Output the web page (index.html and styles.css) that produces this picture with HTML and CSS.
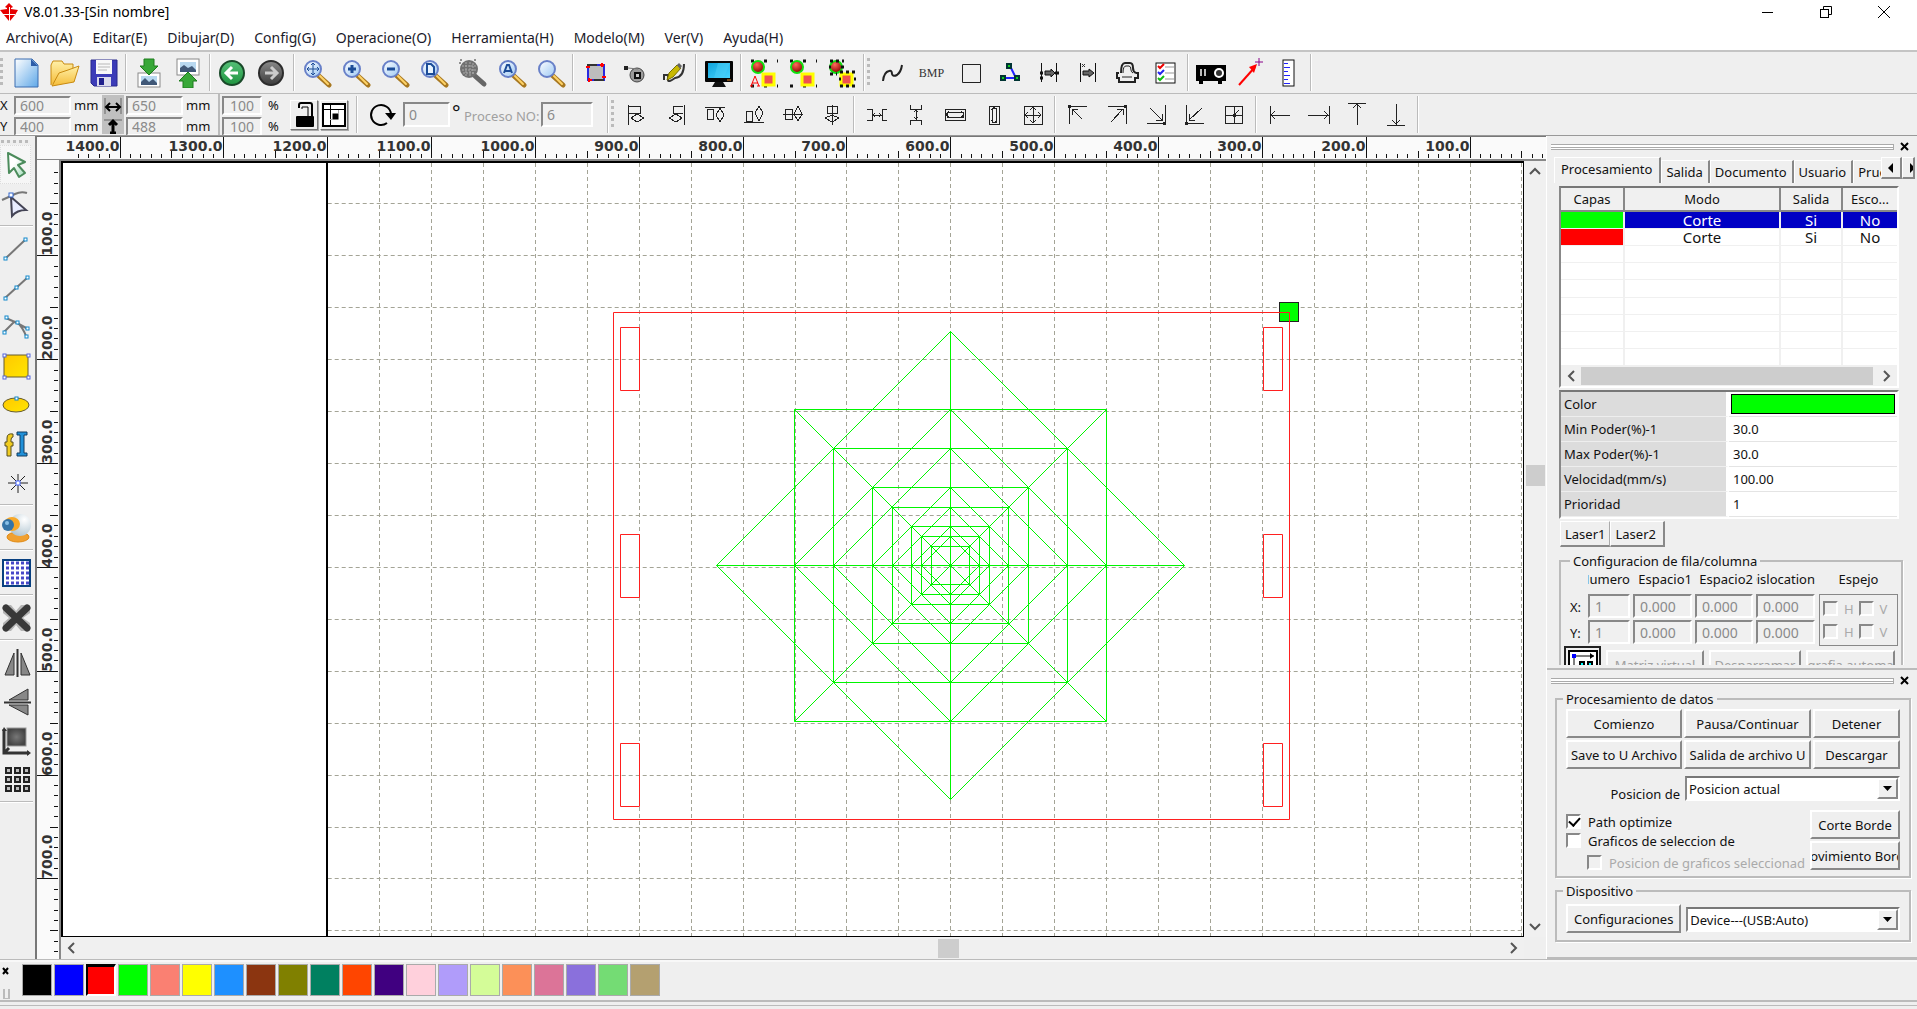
FILE: index.html
```html
<!DOCTYPE html>
<html lang="es">
<head>
    <meta charset="UTF-8">
    <meta name="viewport" content="width=device-width, initial-scale=1.0">
    <title>V8.01.33-[Sin nombre]</title>
    <link rel="stylesheet" href="styles.css">
</head>
<body>
    <!-- Degradados y simbolos compartidos -->
    <svg class="defs" width="0" height="0">
        <defs>
            <linearGradient id="gPage" x1="0" y1="0" x2="1" y2="1"><stop offset="0" stop-color="#fff"/><stop offset="1" stop-color="#5fa8e8"/></linearGradient>
            <linearGradient id="gFolder" x1="0" y1="0" x2="0" y2="1"><stop offset="0" stop-color="#fff0a8"/><stop offset="1" stop-color="#f5bc38"/></linearGradient>
            <linearGradient id="gLens" x1="0" y1="0" x2="1" y2="1"><stop offset="0" stop-color="#fff"/><stop offset="1" stop-color="#9cc8f4"/></linearGradient>
            <linearGradient id="gGreen" x1="0" y1="0" x2="0" y2="1"><stop offset="0" stop-color="#56c078"/><stop offset="1" stop-color="#1f9440"/></linearGradient>
            <linearGradient id="gGray" x1="0" y1="0" x2="0" y2="1"><stop offset="0" stop-color="#8a8a8a"/><stop offset="1" stop-color="#3c3c3c"/></linearGradient>
            <linearGradient id="gScreen" x1="0" y1="0" x2="1" y2="1"><stop offset="0" stop-color="#10a4dc"/><stop offset="1" stop-color="#48d4ff"/></linearGradient>
            <linearGradient id="gYellow" x1="0" y1="0" x2="1" y2="1"><stop offset="0" stop-color="#ffc800"/><stop offset="1" stop-color="#ffe600"/></linearGradient>
            <linearGradient id="gArrow" x1="0" y1="0" x2="1" y2="1"><stop offset="0.4" stop-color="#fff"/><stop offset="1" stop-color="#9fdcb8"/></linearGradient>
            <radialGradient id="gBall" cx="0.4" cy="0.3" r="0.7"><stop offset="0" stop-color="#ff6a5a"/><stop offset="1" stop-color="#8a0000"/></radialGradient>
            <radialGradient id="gCam" cx="0.7" cy="0.25" r="0.9"><stop offset="0" stop-color="#fff"/><stop offset="1" stop-color="#a8bfcc"/></radialGradient>
            <radialGradient id="gBlock"><stop offset="0" stop-color="#777"/><stop offset="1" stop-color="#444"/></radialGradient>
        </defs>
        <symbol id="lens" viewBox="0 0 30 30">
            <path d="M17 18 L27 27" stroke="#a87820" stroke-width="5" stroke-linecap="round"/>
            <path d="M18 18 L26 26" stroke="#ffd468" stroke-width="2" stroke-linecap="round"/>
            <circle cx="11" cy="11" r="8" fill="url(#gLens)" stroke="#6880c8" stroke-width="2"/>
        </symbol>
        <symbol id="shapes" viewBox="0 0 30 30">
            <circle cx="9" cy="9" r="6" fill="url(#gBall)" stroke="#10e010" stroke-width="2"/>
            <rect x="14" y="16" width="11" height="11" fill="#f05050" stroke="#ffff00" stroke-width="3"/>
        </symbol>
    </svg>

    <header class="titlebar">
        <svg class="logo" viewBox="0 0 20 20" width="20" height="20">
            <g fill="#e60000"><path d="M9 1 L13 5 L11 6 V8 H7 V6 L5 5 Z"/><path d="M0 8 L7 7 L8 12 L4 13 Z"/><path d="M18 8 L11 7 L10 12 L15 13 Z"/><rect x="4" y="8" width="10" height="4"/><path d="M9 12 V19 L4 13 Z"/><path d="M10 12 V19 L15 13 Z"/></g>
            <path d="M9.5 5 V18 M3 12.500 H15" stroke="#fff" stroke-width="1"/>
        </svg>
        <h1>V8.01.33-[Sin nombre]</h1>
        <div class="window-buttons">
            <button aria-label="Minimizar"><svg width="12" height="12"><path d="M0 6.500 H11" stroke="#000"/></svg></button>
            <button aria-label="Restaurar"><svg width="12" height="12" fill="none" stroke="#000"><rect x="0.500" y="3.500" width="8" height="8"/><path d="M3.500 3 V0.500 H11.500 V8.500 H9"/></svg></button>
            <button aria-label="Cerrar"><svg width="12" height="12"><path d="M0 0 L12 12 M12 0 L0 12" stroke="#000"/></svg></button>
        </div>
    </header>

    <nav class="menu">
        <a href="#">Archivo(A)</a>
        <a href="#">Editar(E)</a>
        <a href="#">Dibujar(D)</a>
        <a href="#">Config(G)</a>
        <a href="#">Operacione(O)</a>
        <a href="#">Herramienta(H)</a>
        <a href="#">Modelo(M)</a>
        <a href="#">Ver(V)</a>
        <a href="#">Ayuda(H)</a>
    </nav>

    <!-- Barra principal -->
    <div class="toolbar">
        <span class="grip"></span>
        <button class="tool" aria-label="Nuevo"><svg viewBox="0 0 30 30"><path d="M4 1 H21 L27 7 V29 H4 Z" fill="url(#gPage)" stroke="#3a6cb0"/><path d="M20 1 V8 H27 Z" fill="#2c5ca8"/></svg></button>
        <button class="tool" aria-label="Abrir"><svg viewBox="0 0 30 30"><path d="M1 27 V7 L3 3 H12 L14 6 H23 V12" fill="url(#gFolder)" stroke="#c88a10"/><path d="M2 28 L9 15 L18 12 L29 8 L24 24 Z" fill="url(#gFolder)" stroke="#c88a10"/></svg></button>
        <button class="tool" aria-label="Guardar"><svg viewBox="0 0 30 30"><path d="M2 2 H28 V28 H5 L2 25 Z" fill="#3c3cb8" stroke="#28288c"/><rect x="7" y="2" width="16" height="14" fill="#f8f8f8"/><path d="M9 6 H21 M9 9 H21 M9 12 H18" stroke="#b8b8b8"/><rect x="8" y="19" width="14" height="9" fill="#dcdcec"/><rect x="10" y="20" width="5" height="7" fill="#20208c"/></svg></button>
        <span class="sep"></span>
        <button class="tool" aria-label="Importar"><svg viewBox="0 0 30 30"><rect x="4" y="15" width="22" height="14" fill="#fff" stroke="#8a8a8a"/><rect x="7" y="18" width="16" height="9" fill="#b8d8f0"/><path d="M7 27 V24 L11 20 L15 24 L19 21 L23 25 V27 Z" fill="#405878"/><path d="M10 1 H20 V8 H24 L15 17 L6 8 H10 Z" fill="#38a838" stroke="#1c7c1c"/></svg></button>
        <button class="tool" aria-label="Exportar"><svg viewBox="0 0 30 30"><rect x="4" y="1" width="22" height="16" fill="#fff" stroke="#8a8a8a"/><rect x="7" y="4" width="16" height="10" fill="#b8d8f0"/><path d="M7 14 V10 L11 7 L15 10 L19 8 L23 12 V14 Z" fill="#405878"/><path d="M10 30 H20 V23 H24 L15 14 L6 23 H10 Z" fill="#38a838" stroke="#1c7c1c"/></svg></button>
        <span class="sep"></span>
        <button class="tool" aria-label="Deshacer"><svg viewBox="0 0 30 30"><circle cx="14" cy="15" r="12" fill="url(#gGreen)" stroke="#184828" stroke-width="2"/><path d="M20 15 H9 M14 9 L8 15 L14 21" fill="none" stroke="#fff" stroke-width="3"/></svg></button>
        <button class="tool" aria-label="Rehacer"><svg viewBox="0 0 30 30"><circle cx="14" cy="15" r="12" fill="url(#gGray)" stroke="#2c2c2c" stroke-width="2"/><path d="M8 15 H19 M14 9 L20 15 L14 21" fill="none" stroke="#ccc" stroke-width="3"/></svg></button>
        <span class="sep"></span>
        <button class="tool" aria-label="Mover vista"><svg viewBox="0 0 30 30"><use href="#lens"/><path d="M11 5 V17 M5 11 H17 M9 7 L11 5 L13 7 M9 15 L11 17 L13 15 M7 9 L5 11 L7 13 M15 9 L17 11 L15 13" fill="none" stroke="#1c4c98"/></svg></button>
        <button class="tool" aria-label="Acercar"><svg viewBox="0 0 30 30"><use href="#lens"/><path d="M11 7 V15 M7 11 H15" stroke="#1c4c98" stroke-width="3"/></svg></button>
        <button class="tool" aria-label="Alejar"><svg viewBox="0 0 30 30"><use href="#lens"/><path d="M7 11 H15" stroke="#1c4c98" stroke-width="3"/></svg></button>
        <button class="tool" aria-label="Ver pagina"><svg viewBox="0 0 30 30"><use href="#lens"/><path d="M8 6 H12 L15 9 V16 H8 Z" fill="#e8f4ff" stroke="#1c4c98" stroke-width="2"/></svg></button>
        <button class="tool" aria-label="Ver todo"><svg viewBox="0 0 30 30"><path d="M17 18 L26 26" stroke="#666" stroke-width="5" stroke-linecap="round"/><circle cx="11" cy="11" r="9" fill="#707070"/><path d="M8 4 V18 M12 4 V18 M15 5 V16 M4 8 H18 M4 12 H18 M5 15 H17" stroke="#aaa" stroke-dasharray="2 1"/><path d="M2 6 V2 H6 M16 2 H20" fill="none" stroke="#333" stroke-dasharray="2 2"/></svg></button>
        <button class="tool" aria-label="Ver seleccion"><svg viewBox="0 0 30 30"><use href="#lens"/><path d="M7 15 L10 7 H12 L15 15 M8 13 H14" fill="none" stroke="#1c4c98" stroke-width="2"/></svg></button>
        <button class="tool" aria-label="Lupa"><svg viewBox="0 0 30 30"><use href="#lens"/></svg></button>
        <span class="sep"></span>
        <button class="tool" aria-label="Marco"><svg viewBox="0 0 30 30"><rect x="7" y="7" width="16" height="15" fill="#bdbdbd" stroke="#2828e0" stroke-width="2"/><path d="M6 7 H16 M13 22 H23" stroke="#333" stroke-width="2"/><path d="M5 9 H9 M21 5 V9 M19 7 H23 M8 20 V24 M7 22 H11 M21 19 H25" stroke="#f00" stroke-width="2"/></svg></button>
        <button class="tool" aria-label="Origen"><svg viewBox="0 0 30 30"><circle cx="17" cy="17" r="7" fill="#9c9c9c" stroke="#444"/><rect x="15" y="15" width="5" height="5" fill="#ccc" stroke="#111" stroke-width="2"/><rect x="4" y="8" width="4" height="4" fill="#222"/><path d="M8 10 L18 11" stroke="#777"/></svg></button>
        <button class="tool" aria-label="Pluma"><svg viewBox="0 0 30 30"><path d="M5 22 V17 H9 V22 Q9 25 16 20 Q25 19 25 6" fill="none" stroke="#333" stroke-width="2"/><path d="M8 22 L10 15 L18 7 L22 10 L14 19 Z" fill="#c8b800" stroke="#787000"/><path d="M18 7 L20 5 L23 8 L21 11 Z" fill="#666"/></svg></button>
        <span class="sep"></span>
        <button class="tool" aria-label="Vista previa"><svg viewBox="0 0 30 30"><rect x="1" y="3" width="28" height="21" rx="1" fill="#050505"/><rect x="4" y="5" width="22" height="15" fill="url(#gScreen)"/><path d="M14 5 H26 L20 20 H10 Z" fill="#4cd0f8" opacity="0.500"/><path d="M11 24 H19 L22 29 H8 Z" fill="#111"/><path d="M23 22 H27" stroke="#e89030"/></svg></button>
        <span class="sep"></span>
        <button class="tool" aria-label="Agrupar"><svg viewBox="0 0 30 30"><path d="M2 3 H29 M2 28 H29" stroke="#111" stroke-width="3" stroke-dasharray="3 10"/><use href="#shapes"/><path d="M2 28 L6 18 L10 28 M3 25 H9 M1 28 H4 M8 28 H11" fill="none" stroke="#f00" stroke-width="1"/></svg></button>
        <button class="tool" aria-label="Desagrupar"><svg viewBox="0 0 30 30"><path d="M2 3 H29 M2 28 H29" stroke="#111" stroke-width="3" stroke-dasharray="3 10"/><use href="#shapes"/></svg></button>
        <button class="tool" aria-label="Desagrupar todo"><svg viewBox="0 0 30 30"><use href="#shapes"/><path d="M3 3 H17 M3 16 H10 M13 14 H28 M13 28 H28" stroke="#111" stroke-width="3" stroke-dasharray="3 3"/><path d="M2 9 H4 M14 9 H17 M12 21 H14 M27 21 H29" stroke="#111" stroke-width="3"/></svg></button>
        <span class="sep"></span>
        <span class="grip"></span>
        <button class="tool" aria-label="Curva"><svg viewBox="0 0 30 30"><path d="M5 23 Q6 14 11 13 Q14 12 14 16 Q15 19 19 17 Q23 14 24 7" fill="none" stroke="#222" stroke-width="2"/></svg></button>
        <button class="tool bmp">BMP</button>
        <button class="tool" aria-label="Rectangulo"><svg viewBox="0 0 30 30"><path d="M6.500 6.500 H24.500 V24.500 H6.500 Z" fill="none" stroke="#222"/></svg></button>
        <button class="tool" aria-label="Ruta"><svg viewBox="0 0 30 30"><path d="M8 20 H21 L16 10" fill="none" stroke="#2020ff" stroke-width="2"/><g fill="#10d020" stroke="#033" stroke-width="2"><rect x="12" y="6" width="4" height="4"/><rect x="6" y="18" width="4" height="4"/><rect x="20" y="18" width="4" height="4"/></g></svg></button>
        <button class="tool" aria-label="Corte inicial"><svg viewBox="0 0 30 30"><path d="M7.500 5 V24 M22.500 5 V24" stroke="#111"/><path d="M6 15 H9 M6 20 H9 M21 15 H25" stroke="#111" stroke-width="3"/><path d="M11 13 H17 V11 L21 15 L17 19 V17 H11 Z" fill="#666" stroke="#111"/></svg></button>
        <button class="tool" aria-label="Desplazar corte"><svg viewBox="0 0 30 30"><path d="M7.500 5 V24 M22.500 5 V24" stroke="#111"/><path d="M9 6 L12 9 M12 6 L9 9" stroke="#333"/><path d="M10 13 H16 V11 L21 15 L16 19 V17 H10 Z" fill="#666" stroke="#111"/></svg></button>
        <button class="tool" aria-label="Suavizar"><svg viewBox="0 0 30 30" fill="none" stroke="#222"><path d="M9 15 Q9 5 13 5 H18 Q21 5 21 10 Q21 14 24 15" stroke-width="2"/><path d="M11 15 Q11 8 14 8 H17 Q19 8 19 12 Q19 14 21 15 M10 19 H20"/><path d="M7 15 H5 V20 H7 V24 H23 V20 H26 V15 H24" stroke-width="2"/></svg></button>
        <button class="tool" aria-label="Lista de tareas"><svg viewBox="0 0 30 30"><rect x="5" y="5" width="19" height="20" fill="#fff" stroke="#111"/><path d="M14 9 H23 M14 15 H23 M14 21 H23" stroke="#ccc" stroke-width="2"/><path d="M7 8 L9 10 L13 6" fill="none" stroke="#e00" stroke-width="2"/><path d="M7 14 L9 16 L13 12" fill="none" stroke="#22e" stroke-width="2"/><path d="M7 20 L9 22 L13 18" fill="none" stroke="#1b1" stroke-width="2"/></svg></button>
        <span class="sep"></span>
        <button class="tool" aria-label="Simular"><svg viewBox="0 0 30 30"><path d="M0 7 H30 V23 H26 V26 H22 V23 H7 V26 H3 V23 H0 Z" fill="#000"/><circle cx="23" cy="15" r="4" fill="#333" stroke="#fff" stroke-width="2"/><path d="M5 11 V18 M9 11 V18" stroke="#bbb" stroke-width="2"/></svg></button>
        <button class="tool" aria-label="Posicion"><svg viewBox="0 0 30 30"><path d="M4 27 L20 9" stroke="#f00" stroke-width="2"/><path d="M14 9 L22 6 L19 15 Z" fill="#f00"/><path d="M24 0 V8 M20 4 H28" stroke="#808" stroke-width="1"/></svg></button>
        <button class="tool" aria-label="Regla"><svg viewBox="0 0 30 30"><rect x="9" y="2" width="11" height="26" fill="#fff" stroke="#111"/><path d="M10 5.500 H14 M10 9.500 H16 M10 13.500 H14 M10 17.500 H16 M10 21.500 H14 M10 25.500 H16" stroke="#22f"/></svg></button>
        <span class="sep"></span>
    </div>

    <!-- Barra de posicion y alineacion -->
    <div class="toolbar second">
        <div class="coords">
            <label for="px">X</label><input id="px" value="600" disabled><span>mm</span>
            <label for="py">Y</label><input id="py" value="400" disabled><span>mm</span>
        </div>
        <div class="link-icons">
            <svg width="22" height="39" stroke="#000" fill="none"><path d="M3 3 V19 M19 3 V19" stroke="#666"/><path d="M4 12 H18 M8 8 L4 12 L8 16 M14 8 L18 12 L14 16" stroke-width="2"/><path d="M2 25 H20" stroke="#666"/><path d="M11 27 V38 M7 30 L11 26 L15 30 M8 38 H14" stroke-width="3"/></svg>
        </div>
        <div class="coords size">
            <input value="650" aria-label="Ancho" disabled><span>mm</span>
            <input value="488" aria-label="Alto" disabled><span>mm</span>
        </div>
        <div class="coords percent">
            <input value="100" aria-label="Ancho en porcentaje" disabled><span>%</span>
            <input value="100" aria-label="Alto en porcentaje" disabled><span>%</span>
        </div>
        <button class="raised" aria-label="Bloquear proporcion"><svg width="24" height="26"><rect x="4" y="14" width="18" height="11" rx="1" fill="#000"/><path d="M7 6 V3 Q7 1 9 1 H18 Q20 1 20 3 V14" fill="none" stroke="#000" stroke-width="2"/><path d="M10 7 V5 H16 V14" fill="none" stroke="#000"/></svg></button>
        <button class="raised" aria-label="Referencia"><svg width="24" height="26" fill="none" stroke="#000"><rect x="1" y="2" width="22" height="22" stroke-width="2" fill="#fff"/><path d="M8.500 2 V24 M1 7.500 H23"/><rect x="11" y="12" width="5" height="5" fill="#000"/><path d="M16.500 8 V12 M8 17.500 H11" stroke="#aaa"/></svg></button>
        <span class="sep"></span>
        <svg class="rotate" viewBox="0 0 30 30" width="30" height="30"><path d="M20 23 A10 10 0 1 1 24 14" fill="none" stroke="#000" stroke-width="2"/><path d="M18 13 H29 L24 20 Z" fill="#000"/></svg>
        <input class="angle" value="0" aria-label="Angulo" disabled>
        <span class="degree">°</span>
        <label class="process" for="proc">Proceso NO:</label>
        <input class="angle number" id="proc" value="6" disabled>
        <span class="sep"></span>
        <span class="grip"></span>
        <button class="tool line" aria-label="Alinear izquierda"><svg viewBox="0 0 30 30"><path d="M6 5 V25 M7 6 H18 V13 H7 M15 14 L22 18 L15 22 L9 18 Z"/></svg></button>
        <button class="tool line" aria-label="Alinear derecha"><svg viewBox="0 0 30 30"><path d="M23 5 V25 M22 6 H12 V13 H22 M15 14 L8 18 L15 22 L21 18 Z"/></svg></button>
        <button class="tool line" aria-label="Alinear arriba"><svg viewBox="0 0 30 30"><path d="M5 7 H25 M7 9 H13 V19 H7 Z M20 8 L24 15 L20 22 L16 15 Z"/></svg></button>
        <button class="tool line" aria-label="Alinear abajo"><svg viewBox="0 0 30 30"><path d="M5 22 H25 M7 11 H13 V21 H7 Z M20 6 L24 13 L20 21 L16 13 Z"/></svg></button>
        <button class="tool line" aria-label="Centrar horizontal"><svg viewBox="0 0 30 30"><path d="M5 14 H25 M7 9 H14 V19 H7 Z M20 6 L24 14 L20 21 L16 14 Z"/></svg></button>
        <button class="tool line" aria-label="Centrar vertical"><svg viewBox="0 0 30 30"><path d="M15 5 V25 M10 6 H20 V13 H10 Z M15 15 L22 18 L15 22 L8 18 Z"/></svg></button>
        <span class="sep"></span>
        <button class="tool line" aria-label="Espacio horizontal"><svg viewBox="0 0 30 30"><path d="M5 9 H10 V20 H5 M25 9 H20 V20 H25 M10 15 H20 M13 13 L11 15 L13 17 M17 13 L19 15 L17 17"/></svg></button>
        <button class="tool line" aria-label="Espacio vertical"><svg viewBox="0 0 30 30"><path d="M9 5 V9 H20 V5 M9 25 V20 H20 V25 M15 9 V20 M13 12 L15 10 L17 12 M13 17 L15 19 L17 17"/></svg></button>
        <button class="tool line" aria-label="Mismo ancho"><svg viewBox="0 0 30 30"><path d="M5 9 H25 V20 H5 Z M7 12 H23 V17 H7 Z M9 11 L6 14 L9 18 M21 11 L24 14 L21 18"/></svg></button>
        <button class="tool line" aria-label="Mismo alto"><svg viewBox="0 0 30 30"><path d="M10 6 H20 V24 H10 Z M13 8 V22 H17 V8 Z M12 10 L15 7 L18 10 M12 20 L15 23 L18 20"/></svg></button>
        <button class="tool line" aria-label="Mismo tamaño"><svg viewBox="0 0 30 30"><path d="M6 6 H24 V24 H6 Z M15 7 V23 M7 15 H23 M12 10 L15 7 L18 10 M12 20 L15 23 L18 20 M10 12 L7 15 L10 18 M20 12 L23 15 L20 18"/></svg></button>
        <span class="sep"></span>
        <button class="tool line" aria-label="Esquina superior izquierda"><svg viewBox="0 0 30 30"><path d="M6 24 V6 H24 M9 9 L19 19 M9 15 V9 H15"/><path d="M5 6 H8" stroke-width="3"/></svg></button>
        <button class="tool line" aria-label="Esquina superior derecha"><svg viewBox="0 0 30 30"><path d="M24 24 V6 H6 M21 9 L9 22 M15 9 H21 V15"/><path d="M22 6 H25" stroke-width="3"/></svg></button>
        <button class="tool line" aria-label="Esquina inferior derecha"><svg viewBox="0 0 30 30"><path d="M24 5 V23 H6 M9 8 L21 20 M15 20 H21 V14"/><path d="M22 23 H25" stroke-width="3"/></svg></button>
        <button class="tool line" aria-label="Esquina inferior izquierda"><svg viewBox="0 0 30 30"><path d="M6 5 V23 H24 M22 8 L9 20 M9 14 V20 H15"/><path d="M5 23 H8" stroke-width="3"/></svg></button>
        <button class="tool line" aria-label="Centrar en mesa"><svg viewBox="0 0 30 30"><path d="M6 6 H23 V23 H6 Z M15 6 V23 M6 15 H23 M15 15 L20 10"/><path d="M14 15 H17" stroke-width="3"/></svg></button>
        <span class="sep"></span>
        <button class="tool line" aria-label="Borde izquierdo"><svg viewBox="0 0 30 30"><path d="M6 6 V24 M6 15 H26 M11 11 L7 15 L11 19"/></svg></button>
        <button class="tool line" aria-label="Borde derecho"><svg viewBox="0 0 30 30"><path d="M26 6 V24 M5 15 H26 M21 11 L25 15 L21 19"/></svg></button>
        <button class="tool line" aria-label="Borde superior"><svg viewBox="0 0 30 30"><path d="M6 3 H24 M15 3 V25 M11 8 L15 4 L19 8"/></svg></button>
        <button class="tool line" aria-label="Borde inferior"><svg viewBox="0 0 30 30"><path d="M6 25 H24 M15 4 V25 M11 20 L15 24 L19 20"/></svg></button>
        <span class="sep"></span>
    </div>

    <main>
        <!-- Herramientas de dibujo -->
        <aside class="side-tools">
            <span class="grip flat"></span>
            <button class="tool active" aria-label="Seleccionar"><svg viewBox="0 0 30 30"><path d="M7 3 L24 12 L17 15 L24 23 L18 27 L13 18 L8 23 Z" fill="url(#gArrow)" stroke="#4c8c5c" stroke-width="2" stroke-linejoin="round"/></svg></button>
            <button class="tool" aria-label="Editar nodos"><svg viewBox="0 0 30 30"><path d="M1 11 Q8 8 14 5 Q20 2 26 4" fill="none" stroke="#777" stroke-width="2"/><path d="M10 8 L25 21 Q16 21 11 27 Z" fill="#e8ecff" stroke="#445" stroke-width="2"/><rect x="8" y="4" width="4" height="4" fill="#fff" stroke="#36c"/></svg></button>
            <span class="sep"></span>
            <button class="tool" aria-label="Linea"><svg viewBox="0 0 30 30"><path d="M5 24 L24 6" stroke="#777" stroke-width="2"/><g fill="#fff" stroke="#18c"><rect x="3" y="23" width="3" height="3"/><rect x="23" y="4" width="3" height="3"/></g></svg></button>
            <button class="tool" aria-label="Polilinea"><svg viewBox="0 0 30 30"><path d="M4 25 L26 5" stroke="#777" stroke-width="2"/><g fill="#fff" stroke="#18c"><rect x="3" y="24" width="3" height="3"/><rect x="14" y="13" width="3" height="3"/><rect x="25" y="3" width="3" height="3"/></g></svg></button>
            <button class="tool" aria-label="Bezier"><svg viewBox="0 0 30 30"><path d="M3 20 L14 9 M5 6 L16 11 L27 17 M17 11 Q22 16 25 24" fill="none" stroke="#777" stroke-width="2"/><g fill="#fff" stroke="#18c"><rect x="4" y="4" width="3" height="3"/><rect x="2" y="19" width="3" height="3"/><rect x="15" y="9" width="3" height="3"/><rect x="25" y="15" width="3" height="3"/><rect x="24" y="23" width="3" height="3"/></g></svg></button>
            <button class="tool" aria-label="Rectangulo"><svg viewBox="0 0 30 30"><rect x="3" y="4" width="24" height="22" fill="url(#gYellow)" stroke="#665c30"/><g fill="#fff" stroke="#56d"><rect x="2" y="3" width="3" height="3"/><rect x="26" y="3" width="3" height="3"/><rect x="2" y="25" width="3" height="3"/><rect x="26" y="25" width="3" height="3"/></g></svg></button>
            <button class="tool" aria-label="Elipse"><svg viewBox="0 0 30 30"><ellipse cx="15" cy="15" rx="13" ry="7" fill="url(#gYellow)" stroke="#665c30"/><rect x="14" y="7" width="3" height="3" fill="#fff" stroke="#18c"/></svg></button>
            <button class="tool" aria-label="Texto"><svg viewBox="0 0 30 30"><path d="M6 27 V17 H4 V13 H6 V9 Q6 4 12 5 V8 Q10 8 10 11 V13 H12 V17 H10 V27 Z" fill="#f0cc20" stroke="#554c20"/><path d="M16 3 H26 V6 H23 V24 H26 V27 H16 V24 H19 V6 H16 Z" fill="#2090d8" stroke="#123c60"/></svg></button>
            <button class="tool" aria-label="Punto"><svg viewBox="0 0 30 30"><path d="M17 6 V25 M7 15 H27 M10 8 L24 22 M24 8 L10 22" stroke="#222"/><rect x="15" y="13" width="4" height="4" fill="#fff" stroke="#46f"/></svg></button>
            <span class="sep"></span>
            <button class="tool" aria-label="Camara"><svg viewBox="0 0 30 30"><ellipse cx="17" cy="24" rx="11" ry="5" fill="#f0a030" stroke="#e08810"/><circle cx="19" cy="12" r="11" fill="url(#gCam)"/><ellipse cx="11" cy="11" rx="8" ry="7" fill="#f8a828"/><circle cx="7" cy="12" r="6" fill="#3474a8"/><circle cx="6" cy="10" r="2" fill="#88c0e8"/></svg></button>
            <span class="sep"></span>
            <button class="tool" aria-label="Cuadricula"><svg viewBox="0 0 30 30"><rect x="2" y="2" width="27" height="26" fill="#fff" stroke="#084080" stroke-width="2"/><path d="M5 5 H28 M5 10 H28 M5 15 H28 M5 20 H28 M5 25 H28" stroke="#4848c8" stroke-width="3" stroke-dasharray="3 2"/></svg></button>
            <span class="sep"></span>
            <button class="tool" aria-label="Borrar"><svg viewBox="0 0 30 30"><rect x="2" y="2" width="27" height="26" fill="#b4b4b4"/><path d="M10 2 L15 8 L20 2 M10 28 L15 22 L20 28 M2 10 L8 15 L2 20 M29 10 L22 15 L29 20" fill="#efefef"/><path d="M5 5 L26 25 M26 5 L5 25" stroke="#383838" stroke-width="7" stroke-linecap="round"/></svg></button>
            <span class="sep"></span>
            <button class="tool" aria-label="Espejo horizontal"><svg viewBox="0 0 30 30"><path d="M13 5 V27 H4 Z M20 5 V27 H29 Z" fill="#888" stroke="#333"/><path d="M16.500 1 V29" stroke="#333" stroke-width="2"/></svg></button>
            <button class="tool" aria-label="Espejo vertical"><svg viewBox="0 0 30 30"><path d="M27 2 V13 H8 Z M27 28 V18 H8 Z" fill="#888" stroke="#333"/><path d="M3 15.500 H30" stroke="#333" stroke-width="2"/></svg></button>
            <button class="tool" aria-label="Origen"><svg viewBox="0 0 30 30"><rect x="6" y="2" width="19" height="18" fill="url(#gBlock)" stroke="#999"/><path d="M3 3 V27 H28 M3 27 L8 22" fill="none" stroke="#333" stroke-width="3"/><path d="M1 5 L3 1 L6 5 M26 24 L30 27 L26 30" fill="#333"/></svg></button>
            <button class="tool" aria-label="Matriz"><svg viewBox="0 0 30 30" fill="#bbb" stroke="#222" stroke-width="2"><rect x="5" y="3" width="5" height="5"/><rect x="14" y="3" width="5" height="5"/><rect x="23" y="3" width="5" height="5"/><rect x="5" y="12" width="5" height="5"/><rect x="14" y="12" width="5" height="5"/><rect x="23" y="12" width="5" height="5"/><rect x="5" y="21" width="5" height="5"/><rect x="14" y="21" width="5" height="5"/><rect x="23" y="21" width="5" height="5"/></svg></button>
            <span class="sep"></span>
        </aside>

        <section class="workspace">
            <div class="corner"></div>
            <div class="ruler top"><svg id="ruler-x"></svg></div>
            <div class="ruler left"><svg id="ruler-y"></svg></div>
            <div class="view">
                <div class="canvas"><svg id="drawing"></svg></div>
                <div class="scroll vertical">
                    <button aria-label="Subir"><svg width="12" height="12"><path d="M1 9 L6 4 L11 9"/></svg></button>
                    <span class="thumb"></span>
                    <button aria-label="Bajar"><svg width="12" height="12"><path d="M1 3 L6 8 L11 3"/></svg></button>
                </div>
                <div class="scroll horizontal">
                    <button aria-label="Izquierda"><svg width="12" height="12"><path d="M9 1 L4 6 L9 11"/></svg></button>
                    <span class="thumb"></span>
                    <button aria-label="Derecha"><svg width="12" height="12"><path d="M3 1 L8 6 L3 11"/></svg></button>
                </div>
            </div>
        </section>

        <aside class="docks">
            <section class="dock layers">
                <div class="dock-bar"><span></span><button aria-label="Cerrar panel"><svg width="10" height="10"><path d="M1 1 L8 8 M8 1 L1 8"/></svg></button></div>
                <div class="tabs">
                    <button class="current">Procesamiento</button>
                    <button>Salida</button>
                    <button>Documento</button>
                    <button>Usuario</button>
                    <button class="cut">Prueba</button>
                    <button class="arrow" aria-label="Anterior"><svg width="8" height="10"><path d="M6 0 V10 L1 5 Z"/></svg></button>
                    <button class="arrow last" aria-label="Siguiente"><svg width="8" height="10"><path d="M2 0 V10 L7 5 Z"/></svg></button>
                </div>

                <div class="layer-list">
                    <table>
                        <thead>
                            <tr><th class="c1">Capas</th><th>Modo</th><th class="c3">Salida</th><th class="c4">Esco...</th></tr>
                        </thead>
                        <tbody>
                            <tr class="selected"><td class="green"></td><td>Corte</td><td>Si</td><td>No</td></tr>
                            <tr><td class="red"></td><td>Corte</td><td>Si</td><td>No</td></tr>
                            <tr><td></td><td></td><td></td><td></td></tr>
                            <tr><td></td><td></td><td></td><td></td></tr>
                            <tr><td></td><td></td><td></td><td></td></tr>
                            <tr><td></td><td></td><td></td><td></td></tr>
                            <tr><td></td><td></td><td></td><td></td></tr>
                            <tr><td></td><td></td><td></td><td></td></tr>
                            <tr><td></td><td></td><td></td><td></td></tr>
                        </tbody>
                    </table>
                    <div class="scroll horizontal">
                        <button aria-label="Izquierda"><svg width="12" height="12"><path d="M9 1 L4 6 L9 11"/></svg></button>
                        <span class="thumb"></span>
                        <button aria-label="Derecha"><svg width="12" height="12"><path d="M3 1 L8 6 L3 11"/></svg></button>
                    </div>
                </div>

                <table class="props">
                    <tr><th>Color</th><td><span class="color-box"></span></td></tr>
                    <tr><th>Min Poder(%)-1</th><td>30.0</td></tr>
                    <tr><th>Max Poder(%)-1</th><td>30.0</td></tr>
                    <tr><th>Velocidad(mm/s)</th><td>100.00</td></tr>
                    <tr><th>Prioridad</th><td>1</td></tr>
                </table>

                <div class="lasers"><button>Laser1</button><button>Laser2</button></div>

                <fieldset class="array">
                    <legend>Configuracion de fila/columna</legend>
                    <div class="array-body">
                        <div class="array-grid">
                            <i></i><b>Numero</b><b>Espacio1</b><b>Espacio2</b><b>Dislocation</b>
                            <label for="nx">X:</label><input id="nx" value="1" disabled><input value="0.000" aria-label="Espacio1 X" disabled><input value="0.000" aria-label="Espacio2 X" disabled><input value="0.000" aria-label="Dislocation X" disabled>
                            <label for="ny">Y:</label><input id="ny" value="1" disabled><input value="0.000" aria-label="Espacio1 Y" disabled><input value="0.000" aria-label="Espacio2 Y" disabled><input value="0.000" aria-label="Dislocation Y" disabled>
                        </div>
                        <div class="mirror">
                            <b>Espejo</b>
                            <div class="mirror-box">
                                <label><input type="checkbox" disabled>H</label><label><input type="checkbox" disabled>V</label>
                                <label><input type="checkbox" disabled>H</label><label><input type="checkbox" disabled>V</label>
                            </div>
                        </div>
                    </div>
                    <div class="array-actions">
                        <button class="matrix" aria-label="Matriz"><svg width="30" height="30"><rect x="1" y="1" width="28" height="30" fill="#fff" stroke="#000" stroke-width="2"/><path d="M6 6 H26 M6 6 V28" stroke="#000"/><path d="M22 3 L26 6 L22 9" fill="#000"/><rect x="4" y="4" width="4" height="4" fill="#00f"/><g fill="#0ff" stroke="#000" stroke-width="2"><rect x="12" y="12" width="4" height="4"/><rect x="20" y="12" width="4" height="4"/></g></svg></button>
                        <button class="b1" disabled>Matriz virtual</button>
                        <button class="b2" disabled>Desparramar</button>
                        <button class="b3" disabled>grafia automa</button>
                    </div>
                </fieldset>
            </section>

            <section class="dock work">
                <div class="dock-bar"><span></span><button aria-label="Cerrar panel"><svg width="10" height="10"><path d="M1 1 L8 8 M8 1 L1 8"/></svg></button></div>
                <fieldset>
                    <legend>Procesamiento de datos</legend>
                    <div class="actions">
                        <button>Comienzo</button><button>Pausa/Continuar</button><button>Detener</button>
                        <button>Save to U Archivo</button><button>Salida de archivo U</button><button>Descargar</button>
                    </div>
                    <div class="row">
                        <label for="pos">Posicion de</label>
                        <span class="combo"><select id="pos"><option>Posicion actual</option></select><span class="drop"></span></span>
                    </div>
                    <div class="options">
                        <div class="checks">
                            <label><input type="checkbox" checked>Path optimize</label>
                            <label><input type="checkbox">Graficos de seleccion de</label>
                            <label class="off"><input type="checkbox" disabled>Posicion de graficos seleccionado</label>
                        </div>
                        <div class="borders">
                            <button>Corte Borde</button>
                            <button>Movimiento Borde</button>
                        </div>
                    </div>
                </fieldset>
                <fieldset class="device">
                    <legend>Dispositivo</legend>
                    <div class="row">
                        <button>Configuraciones</button>
                        <span class="combo"><select aria-label="Dispositivo"><option>Device---(USB:Auto)</option></select><span class="drop"></span></span>
                    </div>
                </fieldset>
            </section>
        </aside>
    </main>

    <footer>
        <div class="palette">
            <div class="palette-side"><button aria-label="Cerrar paleta"><svg width="10" height="10"><path d="M2 2 L7 8 M7 2 L2 8"/></svg></button><span></span></div>
            <div class="colors" id="colors"></div>
        </div>
        <div class="status"><span class="wide"></span><span class="s1"></span><span class="s2"></span><span class="s3"></span><span class="rest"></span></div>
    </footer>

    <script src="script.js"></script>
</body>
</html>
```
FILE: styles.css
```css
* {
    box-sizing: border-box;
}
body {
    margin: 0;
    height: 100vh;
    display: flex;
    flex-direction: column;
    overflow: hidden;
    background-color: #efefef;
    color: #111;
    font-family: "Noto Sans", "Open Sans", sans-serif;
    font-size: 14px;
    line-height: 18px;
}
button, input, select {
    font: inherit;
    color: inherit;
    margin: 0;
    border-radius: 0;
}
button {
    background: none;
    border: none;
    padding: 0;
}
svg {
    display: block;
    flex: none;
}
.defs {
    position: absolute;
}

/* Titulo y menu */
.titlebar {
    display: flex;
    align-items: center;
    height: 23px;
    background-color: #fff;
    color: #000;
}
.titlebar h1 {
    margin: 0 0 0 4px;
    font-size: 14px;
    font-weight: normal;
}
.window-buttons {
    margin-left: auto;
    margin-right: 4px;
    display: flex;
}
.window-buttons button {
    width: 58px;
    height: 23px;
    display: flex;
    align-items: center;
    justify-content: center;
}
.menu {
    display: flex;
    align-items: center;
    height: 29px;
    padding-top: 3px;
    background-color: #fff;
    border-bottom: 2px solid #c4c4c4;
}
.menu a {
    padding: 0 14px 0 6px;
    color: #1a1a2a;
    text-decoration: none;
}

/* Barras de herramientas */
.toolbar {
    display: flex;
    align-items: center;
    height: 41px;
    flex: none;
}
.toolbar.second {
    height: 42px;
    border-top: 1px solid #bbb;
}
.tool {
    width: 39px;
    height: 39px;
    flex: none;
    display: flex;
    align-items: center;
    justify-content: center;
}
.tool svg {
    width: 30px;
    height: 30px;
}
.tool.line svg {
    fill: none;
    stroke: #222;
    stroke-width: 1;
    shape-rendering: crispEdges;
}
.bmp {
    font-family: "Liberation Serif", serif;
    font-size: 12px;
    color: #333;
}
.sep {
    flex: none;
    width: 2px;
    height: 37px;
    margin: 0 2px;
    background-color: #bbb;
    border-right: 1px solid #fff;
}
.grip {
    flex: none;
    width: 3px;
    height: 29px;
    margin: 0 3px 0 0;
    background: repeating-linear-gradient(#bbb 0 3px, transparent 3px 6px);
}

.coords {
    display: grid;
    grid-template-columns: 14px 57px auto;
    row-gap: 2px;
    align-items: center;
    width: 102px;
    flex: none;
    font-size: 13px;
    padding-top: 2px;
}
.coords span {
    padding-left: 3px;
}
.coords.size {
    grid-template-columns: 57px auto;
    width: 94px;
    margin-left: 2px;
    border-right: 2px solid #bbb;
}
.coords.percent {
    grid-template-columns: 40px auto;
    width: 68px;
    margin-left: 2px;
}
.coords.percent span {
    padding-left: 6px;
}
.coords input, .angle, .array-grid input {
    width: 100%;
    height: 19px;
    min-width: 0;
    padding: 0 4px;
    border: 2px solid;
    border-color: #888 #fff #fff #888;
    background-color: #f0f0f0;
    color: #8a8a8a;
    font-size: 14px;
}
.coords.percent input {
    padding-left: 6px;
}
.link-icons {
    background-color: #c0c0c0;
    flex: none;
}
.raised {
    width: 28px;
    height: 30px;
    flex: none;
    margin-right: 2px;
    display: flex;
    align-items: center;
    justify-content: center;
    border: 1px solid;
    border-color: #fff #777 #777 #fff;
    box-shadow: 1px 1px #aaa;
}
.raised + .sep {
    margin-left: 6px;
}
.rotate {
    margin: 0 6px 0 7px;
}
.rotate, .process {
    flex: none;
}
.angle {
    width: 47px;
    height: 25px;
    flex: none;
}
.degree {
    width: 14px;
    padding-left: 2px;
    margin-bottom: 4px;
    font-size: 20px;
}
.process {
    width: 77px;
    color: #a0a0a0;
    white-space: nowrap;
    padding-top: 3px;
    font-size: 13px;
}
.number {
    width: 52px;
    margin-right: 12px;
}

/* Zona central */
main {
    flex: 1;
    min-height: 0;
    display: flex;
    border-top: 1px solid #999;
}
.side-tools {
    width: 35px;
    flex: none;
    display: flex;
    flex-direction: column;
    align-items: flex-start;
    overflow: hidden;
}
.side-tools .tool {
    width: 31px;
}
.side-tools .sep {
    width: 33px;
    height: 2px;
    margin: 2px 0;
    border-right: none;
    border-bottom: 1px solid #fff;
}
.side-tools .flat {
    width: 30px;
    height: 3px;
    margin: 4px 0 2px 1px;
    background: repeating-linear-gradient(90deg, #bbb 0 3px, transparent 3px 6px);
}
.side-tools .active {
    background-color: #f6f6f6;
    outline: 1px dotted #ddd;
    outline-offset: -1px;
}
.workspace {
    flex: 1;
    min-width: 0;
    display: grid;
    grid-template-columns: 24px 1fr;
    grid-template-rows: 24px 1fr;
    border-left: 2px solid #777;
    border-top: 1px solid #777;
}
.ruler, .corner {
    background-color: #fafafa;
    overflow: hidden;
}
.corner {
    border-right: 2px solid #888;
    border-bottom: 2px solid #888;
}
.ruler.top {
    border-bottom: 2px solid #888;
    margin-left: -2px;
}
.ruler.left {
    border-right: 2px solid #888;
    margin-top: -1px;
}
.ruler svg, .canvas svg {
    width: 100%;
    height: 100%;
}
.ruler text {
    font-family: "DejaVu Sans", sans-serif;
    font-size: 14px;
    font-weight: bold;
    fill: #333;
    text-anchor: end;
}
.ruler path {
    stroke: #111;
    stroke-width: 1;
}
.view {
    display: grid;
    min-width: 0;
    min-height: 0;
    grid-template-columns: 1fr 22px;
    grid-template-rows: 1fr 22px;
}
.canvas {
    background-color: #fff;
    border: 2px solid #000;
    border-right-width: 1px;
    border-bottom-width: 1px;
    overflow: hidden;
}
.canvas path, .canvas rect {
    fill: none;
    stroke-width: 1;
}
.canvas .grid {
    stroke: #a4a496;
    stroke-dasharray: 4 3;
}
.canvas .edge {
    stroke: #000;
    stroke-width: 2;
}
.canvas .cut-green {
    stroke: #00f500;
}
.canvas .cut-red {
    stroke: #ff2020;
}
.canvas .handle {
    fill: #00ff00;
    stroke: #222;
}
.scroll {
    display: flex;
    align-items: center;
    background-color: #f0f0f0;
}
.scroll.vertical {
    flex-direction: column;
}
.scroll button {
    width: 20px;
    height: 20px;
    display: flex;
    align-items: center;
    justify-content: center;
}
.scroll path {
    fill: none;
    stroke: #555;
    stroke-width: 2;
}
.scroll .thumb {
    width: 19px;
    height: 21px;
    background-color: #cdcdcd;
}
.view .vertical .thumb {
    margin: auto 0;
    position: relative;
    top: -74px;
}
.view .horizontal .thumb {
    width: 21px;
    height: 19px;
    margin: 0 auto;
    position: relative;
    left: 156px;
}

/* Paneles de la derecha */
.docks {
    width: 371px;
    flex: none;
    display: flex;
    flex-direction: column;
    border-left: 1px solid #fff;
    font-size: 13px;
    line-height: 16px;
}
.dock {
    padding: 6px 18px 0 12px;
}
.dock.layers {
    flex: 1;
    min-height: 0;
    overflow: hidden;
}
.dock.work {
    flex: none;
    height: 291px;
    margin-top: 3px;
    padding: 6px 6px 0 8px;
    border-top: 2px solid #bbb;
    border-bottom: 2px solid #bbb;
}
.dock-bar {
    display: flex;
    align-items: center;
    justify-content: space-between;
    margin: 0 -12px 5px -8px;
}
.work .dock-bar {
    margin: 0 0 5px -4px;
}
.dock-bar span {
    flex: 1;
    height: 6px;
    margin-right: 6px;
    border: solid #aaa;
    border-width: 1px 1px 1px 0;
    background: linear-gradient(#fff 0 2px, #aaa 2px 3px, #fff 3px);
}
.dock-bar button {
    width: 11px;
    height: 10px;
}
.dock-bar path, .palette-side path {
    stroke: #000;
    stroke-width: 2;
}
.tabs {
    display: flex;
    align-items: flex-end;
    height: 26px;
    margin: 0 -16px 3px -5px;
    overflow: hidden;
}
.tabs button {
    height: 23px;
    flex: none;
    padding: 0 5px 0 4px;
    border-top: 1px solid #fff;
    border-left: 1px solid #fff;
    border-right: 2px solid #888;
}
.tabs .current {
    height: 26px;
    padding: 0 7px 3px 6px;
}
.tabs .cut {
    flex: 1;
    min-width: 0;
    overflow: hidden;
    border-right: none;
    text-align: left;
}
.tabs .arrow {
    align-self: flex-start;
    width: 21px;
    height: 22px;
    padding-left: 5px;
    border-bottom: 2px solid #888;
}
.tabs .last {
    width: 13px;
    overflow: hidden;
}

.layer-list {
    height: 202px;
    border: 2px solid;
    border-color: #777 #fff #fff #888;
    background-color: #fff;
    display: flex;
    flex-direction: column;
}
.layer-list table {
    width: 100%;
    flex: 1;
    table-layout: fixed;
    border-collapse: collapse;
}
.layer-list thead tr {
    height: 23px;
}
.layer-list th {
    padding: 0;
    font-weight: normal;
    background-color: #f0f0f0;
    border-right: 2px solid #888;
    border-bottom: 2px solid #888;
}
.layer-list .c1 {
    width: 63px;
}
.layer-list .c3 {
    width: 62px;
}
.layer-list .c4 {
    width: 55px;
    border-right: none;
}
.layer-list td {
    padding: 0;
    height: 17px;
    line-height: 16px;
    font-size: 15px;
    text-align: center;
    border-right: 2px solid #f0f0f0;
    border-bottom: 1px solid #f0f0f0;
}
.layer-list td:last-child {
    border-right: none;
}
.layer-list .selected td {
    background-color: #0000c4;
    color: #fff;
}
.layer-list td.green, .layer-list .selected td.green {
    background-color: #00ff00;
}
.layer-list td.red {
    background-color: #ff0000;
}
.layer-list .scroll {
    height: 20px;
    flex: none;
}
.layer-list .thumb {
    flex: 1;
    height: 18px;
    margin-right: 4px;
}
.props {
    width: 100%;
    margin-top: 2px;
    border-spacing: 0;
    border: 2px solid;
    border-color: #777 #fff #fff #888;
    background-color: #fff;
}
.props th {
    width: 168px;
    height: 25px;
    padding: 0 3px;
    text-align: left;
    font-weight: normal;
    background-color: #dcdcdc;
    border-right: 3px solid #fff;
    border-bottom: 1px solid #eee;
}
.props td {
    padding: 0 2px 0 4px;
    border-bottom: 1px solid #e4e4e4;
}
.color-box {
    display: block;
    height: 20px;
    margin-left: -2px;
    border: 1px solid #000;
    background-color: #00ff00;
}
.lasers {
    display: flex;
    margin: 2px 0 6px 1px;
}
.lasers button {
    height: 26px;
    padding: 0 4px;
    border: 1px solid;
    border-color: #fff #aaa #888 #fff;
    border-bottom-width: 2px;
}
.lasers button:last-child {
    padding: 0 7px 0 4px;
    border-right: 2px solid #888;
}

fieldset {
    min-width: 0;
    margin: 0;
    padding: 0;
    border: 2px solid #bbb;
    border-right-color: #bbb;
    box-shadow: 1px 1px #fff;
}
legend {
    margin-left: 6px;
    padding: 0 3px;
}
.array {
    height: 130px;
    margin-right: -4px;
    padding: 2px 3px 0;
}
.array-body {
    display: flex;
    gap: 3px;
}
.array-body b, .mirror b {
    font-weight: normal;
}
.array-grid {
    flex: 1;
    display: grid;
    grid-template-columns: 21px 42px 59px 58px 59px;
    grid-template-rows: 21px 24px 24px;
    column-gap: 3px;
    row-gap: 2px;
}
.array-grid b {
    display: flex;
    justify-content: flex-end;
    overflow: hidden;
}
.array-grid label {
    padding: 5px 0 0 6px;
}
.array-grid input {
    height: 24px;
    padding: 0 5px;
}
.mirror {
    width: 79px;
    text-align: center;
}
.mirror b {
    display: block;
    height: 23px;
}
.mirror-box {
    display: grid;
    grid-template-columns: 1fr 1fr;
    height: 52px;
    padding: 2px 3px;
    border: 1px solid #888;
    color: #aaa;
}
.mirror label {
    display: flex;
    align-items: center;
    gap: 6px;
}
input[type="checkbox"] {
    appearance: none;
    flex: none;
    width: 15px;
    height: 15px;
    border: 2px solid;
    border-color: #888 #fff #fff #888;
    background-color: #fff;
}
input[type="checkbox"]:disabled {
    background-color: #f0f0f0;
}
input[type="checkbox"]:checked::before {
    content: "";
    display: block;
    width: 9px;
    height: 5px;
    margin: 1px;
    border: solid #000;
    border-width: 0 0 2px 2px;
    transform: rotate(-48deg);
}
.array-actions {
    display: flex;
    gap: 5px;
}
.array-actions button, .work fieldset button {
    border: 2px solid;
    border-color: #fff #888 #888 #fff;
    display: flex;
    align-items: center;
    justify-content: center;
    overflow: hidden;
    white-space: nowrap;
}
.array-actions button {
    height: 30px;
    margin-top: 4px;
    color: #a0a0a0;
}
.array-actions .b1 {
    width: 98px;
}
.array-actions .b2 {
    width: 92px;
}
.array-actions .b3 {
    flex: 1;
    margin-right: 3px;
}
.array-actions .matrix {
    flex: none;
    width: 37px;
    height: 37px;
    margin: 0;
    border: 2px solid #222;
}

.actions {
    display: grid;
    grid-template-columns: 116px 127px 1fr;
    gap: 2px;
    padding: 2px 9px 0;
}
.work fieldset button {
    height: 29px;
}
.row {
    display: flex;
    justify-content: flex-end;
    align-items: flex-start;
    gap: 5px;
    padding: 7px 9px 0;
}
.row label {
    padding-top: 10px;
}
.combo {
    position: relative;
    width: 215px;
}
.combo select {
    appearance: none;
    display: block;
    width: 100%;
    height: 25px;
    padding: 0 24px 0 2px;
    border: 2px solid;
    border-color: #777 #fff #fff #888;
    background-color: #fff;
}
.drop {
    position: absolute;
    top: 2px;
    right: 2px;
    width: 21px;
    height: 21px;
    background-color: #f0f0f0;
    border: 2px solid;
    border-color: #fff #888 #888 #fff;
    pointer-events: none;
}
.drop::before {
    content: "";
    display: block;
    margin: 6px 0 0 4px;
    width: 9px;
    height: 5px;
    background-color: #000;
    clip-path: polygon(0 0, 100% 0, 50% 100%);
}
.options {
    display: flex;
    justify-content: space-between;
    padding: 8px 9px 4px;
}
.checks {
    padding-top: 2px;
    color: #111;
}
.checks label {
    display: flex;
    align-items: center;
    gap: 7px;
    height: 19px;
    white-space: nowrap;
}
.checks .off {
    margin: 3px 0 0 21px;
    width: 218px;
    color: #aaa;
    overflow: hidden;
}
.borders {
    display: flex;
    flex-direction: column;
    gap: 2px;
    width: 90px;
}
.device {
    margin-top: 5px;
    padding-bottom: 7px;
}
.device .row {
    padding: 5px 9px 0;
    justify-content: space-between;
}
.device .row button {
    width: 116px;
}
.device .combo {
    margin-top: 3px;
}

/* Paleta y barra de estado */
footer {
    flex: none;
    height: 50px;
    border-top: 1px solid #bbb;
    overflow: hidden;
}
.palette {
    display: flex;
    align-items: center;
    height: 42px;
    border-bottom: 2px solid #bbb;
    box-shadow: inset 0 2px #f8f8f8;
}
.palette-side {
    width: 22px;
    padding-left: 1px;
}
.palette-side span {
    display: block;
    width: 7px;
    height: 10px;
    margin: 9px 0 0 2px;
    border: solid #bbb;
    border-width: 0 2px 1px;
}
.colors {
    display: flex;
    gap: 2px;
}
.colors button {
    width: 30px;
    height: 32px;
    border: 1px solid #aaa;
}
.colors .current {
    border: 2px solid #000;
    border-color: #000 #fff #fff #000;
    border-top-width: 3px;
}
.status {
    display: flex;
    gap: 3px;
    height: 8px;
    margin-top: 3px;
    padding-top: 3px;
    border-top: 1px solid #bbb;
}
.status span {
    border: 1px solid #bbb;
    border-bottom: none;
}
.status .wide {
    width: 1625px;
}
.status .s1 {
    width: 26px;
}
.status .s2 {
    width: 13px;
}
.status .s3 {
    width: 8px;
}
.status .rest {
    flex: 1;
}
```
FILE: script.js
```javascript
// Escala: pixeles por milimetro de mesa
const scale = 1.0385;

const colors = ["#000000", "#0000ff", "#ff0000", "#00ff00", "#fa8072", "#ffff00", "#1e90ff",
    "#8b3510", "#808000", "#008060", "#ff4500", "#400080", "#ffd0dc", "#b09cfa", "#d4fc98",
    "#fc9058", "#dc7498", "#8a70dc", "#74dc74", "#b4a070"];

function add(svg, name, attrs, text) {
    const el = document.createElementNS("http://www.w3.org/2000/svg", name);
    for (const key in attrs) {
        el.setAttribute(key, attrs[key]);
    }
    if (text) {
        el.textContent = text;
    }
    svg.appendChild(el);
}

function snap(value) {
    return Math.floor(value) + 0.5;
}

// Regla horizontal: 1400 a la izquierda, baja hacia la derecha
function drawRulerX() {
    const svg = document.getElementById("ruler-x");
    let d = "";
    for (let mm = 1440; mm >= 30; mm -= 10) {
        const x = snap(61 + (1400 - mm) * scale);
        const top = mm % 100 === 0 ? 0 : mm % 50 === 0 ? 14 : 17;
        d += `M${x} ${top}V21`;
        if (mm % 100 === 0) {
            add(svg, "text", { x: x - 1, y: 14 }, mm.toFixed(1));
        }
    }
    add(svg, "path", { d: d });
}

function drawRulerY() {
    const svg = document.getElementById("ruler-y");
    let d = "";
    for (let mm = 20; mm < 780; mm += 10) {
        const y = snap(mm * scale - 8);
        const left = mm % 100 === 0 ? 0 : mm % 50 === 0 ? 13 : 17;
        d += `M${left} ${y}H21`;
        if (mm % 100 === 0) {
            add(svg, "text", { x: 0, y: 0, transform: `translate(15 ${y - 44}) rotate(-90)` }, mm.toFixed(1));
        }
    }
    add(svg, "path", { d: d });
}

function drawCanvas() {
    const svg = document.getElementById("drawing");
    const X = mm => 57 + (1400 - mm) * scale;
    const Y = mm => mm * scale - 11;
    const left = X(1200);

    // Cuadricula cada 50 mm
    for (let mm = 1150; mm > 0; mm -= 50) {
        add(svg, "path", { class: "grid", d: `M${snap(X(mm))} 0V2000` });
    }
    for (let mm = 50; mm < 1200; mm += 50) {
        add(svg, "path", { class: "grid", d: `M${left} ${snap(Y(mm))}H3000` });
    }
    add(svg, "path", { class: "edge", d: `M${Math.round(left) - 1} 0V2000` });

    // Cuadrados y rombos concentricos
    const cx = Math.round(X(600)) - 0.5;
    const cy = Math.round(Y(400)) - 1.5;
    const sizes = [225, 150, 112.5, 75, 56.25, 37.5, 28.125, 18.75];
    let d = "";
    sizes.forEach((size, i) => {
        const r = Math.round(size * scale);
        if (i > 0) {
            d += `M${cx - r} ${cy - r}h${2 * r}v${2 * r}h${-2 * r}Z`;
        }
        if (i < 7) {
            d += `M${cx} ${cy - r}l${r} ${r}l${-r} ${r}l${-r} ${-r}Z`;
        }
    });
    const big = Math.round(225 * scale);
    const sq = Math.round(150 * scale);
    d += `M${cx - big} ${cy}h${2 * big}M${cx} ${cy - big}v${2 * big}`;
    d += `M${cx - sq} ${cy - sq}l${2 * sq} ${2 * sq}M${cx + sq} ${cy - sq}l${-2 * sq} ${2 * sq}`;
    add(svg, "path", { class: "cut-green", d: d });

    // Punto de inicio y marco exterior con ranuras
    const fx = cx - 337;
    const fy = cy - 253;
    add(svg, "rect", { class: "handle", x: fx + 666, y: fy - 10, width: 19, height: 19 });
    let red = `M${fx} ${fy}h676v507h-676Z`;
    [15, 222, 431].forEach(y => {
        red += `M${fx + 7} ${fy + y}h19v63h-19ZM${fx + 650} ${fy + y}h19v63h-19Z`;
    });
    add(svg, "path", { class: "cut-red", d: red });
}

function drawPalette() {
    const box = document.getElementById("colors");
    colors.forEach((color, i) => {
        const button = document.createElement("button");
        button.style.backgroundColor = color;
        button.setAttribute("aria-label", "Color " + (i + 1));
        if (i === 2) {
            button.className = "current";
        }
        box.appendChild(button);
    });
}

drawRulerX();
drawRulerY();
drawCanvas();
drawPalette();
```
